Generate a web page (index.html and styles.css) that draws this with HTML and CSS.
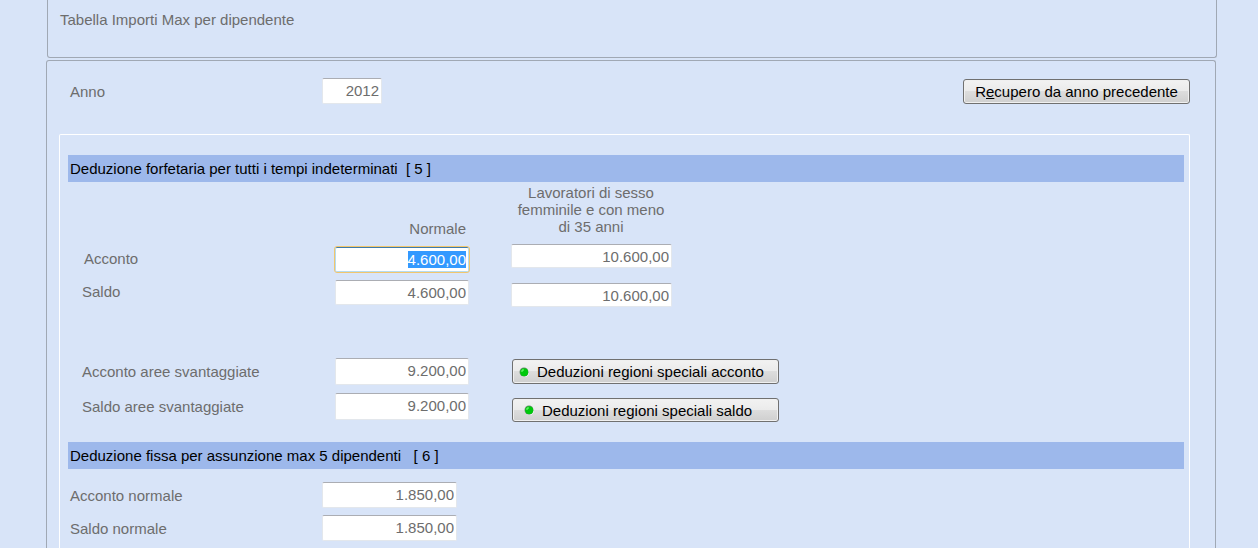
FILE: index.html
```html
<!DOCTYPE html>
<html lang="it">
<head>
<meta charset="utf-8">
<title>Tabella Importi Max per dipendente</title>
<link rel="stylesheet" href="styles.css">
</head>
<body>
<header class="title-panel">
  <h1 class="title">Tabella Importi Max per dipendente</h1>
</header>
<main class="main-panel">
  <div class="year-row">
    <label class="year-label" for="anno">Anno</label>
    <input class="field year-field" id="anno" type="text" value="2012">
    <button class="btn recover-btn" type="button"><span>R<u>e</u>cupero da anno precedente</span></button>
  </div>
  <div class="box">
    <h2 class="band">Deduzione forfetaria per tutti i tempi indeterminati&nbsp; [ 5 ]</h2>
    <div class="columns">
      <div class="col-normal">
        <div class="head-normal">Normale</div>
        <div class="pair compact">
          <div class="row"><label class="row-label first-label" for="n-acconto">Acconto</label><input class="field" id="n-acconto" type="text" value="4.600,00"></div>
          <div class="row"><label class="row-label" for="n-saldo">Saldo</label><input class="field" id="n-saldo" type="text" value="4.600,00"></div>
        </div>
        <div class="pair tall">
          <div class="row"><label class="row-label" for="s-acconto">Acconto aree svantaggiate</label><input class="field" id="s-acconto" type="text" value="9.200,00"></div>
          <div class="row"><label class="row-label" for="s-saldo">Saldo aree svantaggiate</label><input class="field" id="s-saldo" type="text" value="9.200,00"></div>
        </div>
      </div>
      <div class="col-special">
        <div class="head-special">Lavoratori di sesso femminile e con meno di 35 anni</div>
        <div class="special-fields">
          <input class="field" type="text" value="10.600,00" aria-label="Acconto lavoratori di sesso femminile e con meno di 35 anni">
          <input class="field" type="text" value="10.600,00" aria-label="Saldo lavoratori di sesso femminile e con meno di 35 anni">
        </div>
        <div class="special-buttons">
          <button class="btn led-btn" type="button">
            <svg class="led" viewBox="0 0 10 10" aria-hidden="true"><circle cx="5.5" cy="5.5" r="4.5" fill="#fff"/><circle cx="5" cy="5" r="4.5" fill="#6f8a75"/><circle cx="5.2" cy="5.2" r="4" fill="#00c80c"/><path d="M3 5V3h2" fill="none" stroke="#7dff7d"/></svg>
            <span>Deduzioni regioni speciali acconto</span>
          </button>
          <button class="btn led-btn indented" type="button">
            <svg class="led" viewBox="0 0 10 10" aria-hidden="true"><circle cx="5.5" cy="5.5" r="4.5" fill="#fff"/><circle cx="5" cy="5" r="4.5" fill="#6f8a75"/><circle cx="5.2" cy="5.2" r="4" fill="#00c80c"/><path d="M3 5V3h2" fill="none" stroke="#7dff7d"/></svg>
            <span>Deduzioni regioni speciali saldo</span>
          </button>
        </div>
      </div>
    </div>
    <h2 class="band">Deduzione fissa per assunzione max 5 dipendenti&nbsp;&nbsp; [ 6 ]</h2>
    <div class="fixed-rows">
      <div class="row"><label class="row-label" for="f-acconto">Acconto normale</label><input class="field" id="f-acconto" type="text" value="1.850,00"></div>
      <div class="row"><label class="row-label" for="f-saldo">Saldo normale</label><input class="field" id="f-saldo" type="text" value="1.850,00"></div>
    </div>
  </div>
</main>
<script src="script.js"></script>
</body>
</html>
```
FILE: styles.css
```css
* { box-sizing: border-box; }

body {
  margin: 0;
  min-height: 100vh;
  display: flex;
  flex-direction: column;
  gap: 2px;
  background: #d8e4f8;
  color: #6d6d6d;
  font: 15px/17px "Liberation Sans", Arial, sans-serif;
}

.title-panel {
  margin: 0 41px 0 47px;
  padding: 11px 12px 29px;
  border: 1px solid #a0a8b4;
  border-top: 0;
  border-radius: 0 0 3px 3px;
}

.title { margin: 0; font-size: 15px; font-weight: normal; }

.main-panel {
  flex: 1;
  display: flex;
  flex-direction: column;
  margin: 0 42px 0 46px;
  padding: 17px 25px 0 12px;
  border: 1px solid #a0a8b4;
  border-bottom: 0;
  border-radius: 3px 3px 0 0;
}

.year-row {
  display: flex;
  align-items: center;
  padding-left: 11px;
  margin-bottom: 30px;
}

.year-label { width: 252px; }

.field {
  height: 26px;
  min-width: 0;
  padding: 0 2px 1px;
  border: 1px solid #e3e7ec;
  border-top-color: #abadb3;
  border-radius: 2px;
  background: #fff;
  color: #6d6d6d;
  font: inherit;
  text-align: right;
}

.field:focus {
  border-color: #3d7bad #b5dbf0 #b5dbf0;
  outline: 1px solid #f2c66d;
}

.field::selection { background: #3399ff; color: #fff; }

.year-field { width: 60px; }

.btn {
  display: flex;
  align-items: center;
  height: 25px;
  padding: 0 12px;
  border: 1px solid #707070;
  border-radius: 3px;
  background: linear-gradient(#f2f2f2, #ebebeb 48%, #dddddd 50%, #cfcfcf);
  box-shadow: inset 0 0 0 1px #f0f0f0;
  color: #000;
  font: inherit;
  white-space: nowrap;
}

.recover-btn {
  justify-content: center;
  width: 227px;
  margin-left: auto;
}

.box {
  flex: 1;
  padding: 20px 5px 0 8px;
  border: 1px solid #fff;
  border-bottom: 0;
  border-radius: 2px 2px 0 0;
}

.band {
  margin: 0;
  padding: 5px 2px;
  background: #9db8eb;
  color: #000;
  font-size: 15px;
  font-weight: normal;
}

.columns { display: flex; gap: 42px; }

.col-normal { width: 401px; padding: 38px 0 22px 14px; }

.head-normal { padding-right: 3px; margin-bottom: 10px; text-align: right; }

.pair { display: flex; flex-direction: column; gap: 8px; }
.pair.compact .field { height: 25px; }
.pair.compact .row { align-items: flex-start; }
.pair.compact .row-label { padding-top: 3px; }
.pair.tall { margin-top: 53px; }
.pair.tall .field { height: 27px; padding-bottom: 2px; }

.row { display: flex; align-items: center; }
.row-label { flex: 1; }
.first-label { padding-left: 2px; }
.row .field { width: 134px; }

.col-special { width: 268px; padding-top: 2px; }

.head-special { width: 160px; margin-bottom: 9px; text-align: center; }

.special-fields { display: flex; flex-direction: column; gap: 15px; width: 161px; }
.special-fields .field { height: 24px; padding-bottom: 0; }

.special-buttons {
  display: flex;
  flex-direction: column;
  gap: 14px;
  margin-top: 52px;
  padding-left: 1px;
}

.led-btn { gap: 8px; padding: 0 6px; }
.led-btn.indented { height: 24px; padding-left: 11px; }
.led { width: 10px; height: 10px; }

.fixed-rows {
  display: flex;
  flex-direction: column;
  gap: 7px;
  width: 389px;
  padding: 13px 0 6px 2px;
}
.fixed-rows .row .field { width: 135px; }
```
FILE: script.js
```js
// The first amount takes the focus with its content selected.
const first = document.getElementById("n-acconto");
first.focus();
first.select();
```
